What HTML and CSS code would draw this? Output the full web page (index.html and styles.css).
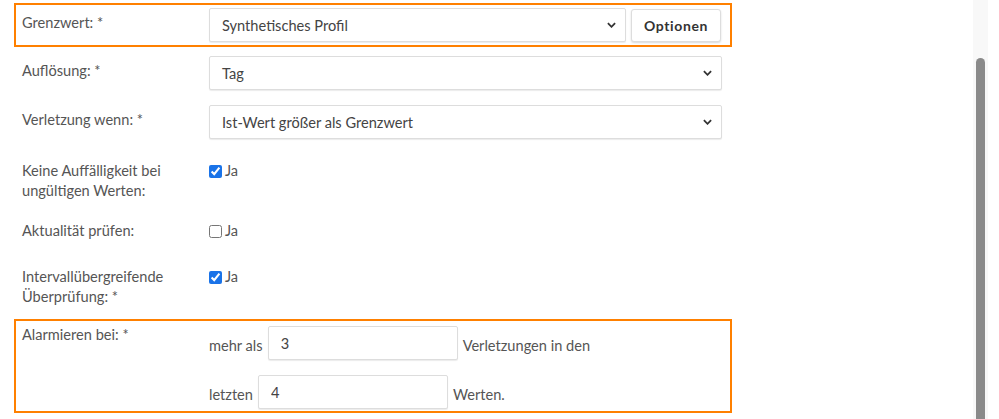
FILE: index.html
```html
<!DOCTYPE html>
<html lang="de">
<head>
<meta charset="utf-8">
<title>Grenzwert</title>
<link rel="stylesheet" href="styles.css">
</head>
<body>
<div class="page">
  <main class="form">
    <div class="row row-a hl">
      <label class="lbl">Grenzwert: *</label>
      <div class="ctrl">
        <div class="select sel-short"><span>Synthetisches Profil</span><svg class="chev" viewBox="0 0 10 6" width="9" height="6"><path d="M1 1l4 4 4-4" fill="none" stroke="#333" stroke-width="2"/></svg></div>
        <button class="btn">Optionen</button>
      </div>
    </div>
    <div class="row row-b">
      <label class="lbl">Auflösung: *</label>
      <div class="ctrl">
        <div class="select"><span>Tag</span><svg class="chev" viewBox="0 0 10 6" width="9" height="6"><path d="M1 1l4 4 4-4" fill="none" stroke="#333" stroke-width="2"/></svg></div>
      </div>
    </div>
    <div class="row row-c">
      <label class="lbl">Verletzung wenn: *</label>
      <div class="ctrl">
        <div class="select"><span>Ist-Wert größer als Grenzwert</span><svg class="chev" viewBox="0 0 10 6" width="9" height="6"><path d="M1 1l4 4 4-4" fill="none" stroke="#333" stroke-width="2"/></svg></div>
      </div>
    </div>
    <div class="row row-d">
      <label class="lbl">Keine Auffälligkeit bei<br>ungültigen Werten:</label>
      <div class="ctrl check"><input type="checkbox" checked><span>Ja</span></div>
    </div>
    <div class="row row-e">
      <label class="lbl">Aktualität prüfen:</label>
      <div class="ctrl check"><input type="checkbox"><span>Ja</span></div>
    </div>
    <div class="row row-f">
      <label class="lbl">Intervallübergreifende<br>Überprüfung: *</label>
      <div class="ctrl check"><input type="checkbox" checked><span>Ja</span></div>
    </div>
    <div class="row row-g hl">
      <label class="lbl">Alarmieren bei: *</label>
      <div class="ctrl stack">
        <div class="line"><span>mehr als</span><input class="num" type="text" value="3"><span>Verletzungen in den</span></div>
        <div class="line"><span>letzten</span><input class="num" type="text" value="4"><span>Werten.</span></div>
      </div>
    </div>
  </main>
  <div class="scrollbar"><div class="thumb"></div></div>
</div>
</body>
</html>
```

FILE: styles.css
```css
* { box-sizing: border-box; }
html, body { margin: 0; padding: 0; background: #fff; }
body {
  font-family: Lato, "Open Sans", sans-serif;
  font-size: 14.6px;
  color: #555;
  width: 999px;
  height: 419px;
  overflow: hidden;
}
.page {
  display: flex;
  height: 419px;
}
.form {
  width: 973px;
  display: flex;
  flex-direction: column;
}
.row {
  margin-left: 14px;
  width: 718px;
  display: flex;
  border: 2px solid transparent;
  padding: 0 8px 0 6px;
}
.row.hl { border-color: #ff8000; }
.lbl {
  width: 187px;
  flex: none;
  line-height: 20px;
}
.ctrl {
  flex: 1;
  display: flex;
  align-items: center;
  gap: 5px;
}
.row-a { margin-top: 3px; padding-top: 3px; padding-bottom: 3px; }
.row-a .lbl, .row-b .lbl, .row-c .lbl { padding-top: 5px; }
.row-b { margin-top: 7px; }
.row-c { margin-top: 11px; }
.row-d { margin-top: 18px; }
.row-e { margin-top: 16px; }
.row-f { margin-top: 22px; }
.row-g { margin-top: 10px; padding-top: 4px; padding-bottom: 2px; }
.row-d .ctrl, .row-e .ctrl, .row-f .ctrl { align-items: flex-start; }

.select {
  flex: 1;
  height: 34px;
  border: 1px solid #ddd;
  border-radius: 2px;
  box-shadow: 0 1px 1px rgba(0,0,0,0.08);
  display: flex;
  align-items: center;
  padding: 0 9px 0 12px;
  color: #444;
  background: #fff;
}
.select span { flex: 1; }
.chev { display: block; }
.btn {
  flex: none;
  width: 90px;
  height: 33px;
  margin-right: 1px;
  border: 1px solid #ddd;
  border-radius: 3px;
  background: #fff;
  box-shadow: 0 1px 2px rgba(0,0,0,0.15);
  font-family: inherit;
  font-size: 14px;
  font-weight: bold;
  letter-spacing: 0.6px;
  color: #333;
}
.check { gap: 3px; height: 20px; align-items: center; }
.check input {
  margin: 4px 0 0 0;
  width: 13px;
  height: 13px;
  accent-color: #1a73e8;
  flex: none;
}
.check span { line-height: 20px; }
.stack {
  flex-direction: column;
  align-items: stretch;
  gap: 15px;
  padding-top: 1px;
}
.line {
  display: flex;
  align-items: center;
  gap: 5px;
  height: 34px;
}
.line span { padding-top: 4px; }
.num {
  width: 190px;
  height: 34px;
  border: 1px solid #ddd;
  border-radius: 2px;
  box-shadow: 0 1px 1px rgba(0,0,0,0.08);
  padding: 0 12px;
  font-family: inherit;
  font-size: 14.6px;
  color: #444;
}
.scrollbar {
  width: 15px;
  flex: none;
  background: #f8f8f8;
  display: flex;
  flex-direction: column;
}
.thumb {
  flex: 1;
  margin-top: 58px;
  margin-left: 3px;
  width: 9px;
  border-radius: 5px 5px 0 0;
  background: #8a8a8a;
}
```
